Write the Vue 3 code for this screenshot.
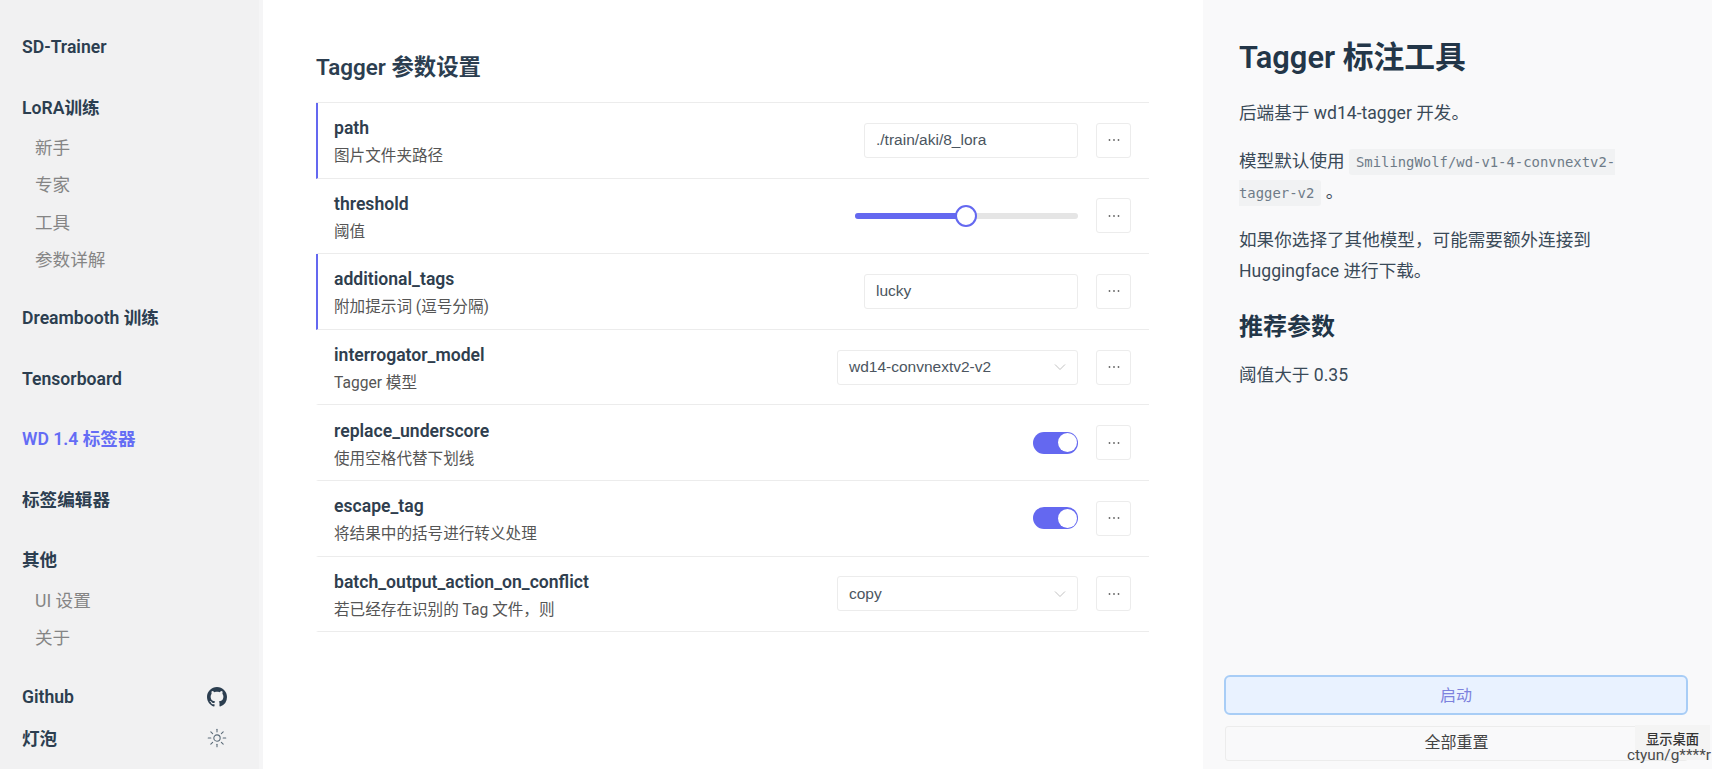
<script setup>
const subA = ['新手', '专家', '工具', '参数详解']
const subB = ['UI 设置', '关于']
const rows = [
  { name: 'path', desc: '图片文件夹路径', type: 'input', value: './train/aki/8_lora', changed: true },
  { name: 'threshold', desc: '阈值', type: 'slider', percent: 50 },
  { name: 'additional_tags', desc: '附加提示词 (逗号分隔)', type: 'input', value: 'lucky', changed: true },
  { name: 'interrogator_model', desc: 'Tagger 模型', type: 'select', value: 'wd14-convnextv2-v2' },
  { name: 'replace_underscore', desc: '使用空格代替下划线', type: 'switch' },
  { name: 'escape_tag', desc: '将结果中的括号进行转义处理', type: 'switch' },
  { name: 'batch_output_action_on_conflict', desc: '若已经存在识别的 Tag 文件，则', type: 'select', value: 'copy' },
]
const rays = [0, 45, 90, 135, 180, 225, 270, 315]
</script>

<template>
  <div class="app">
    <aside class="sidebar">
      <div class="section">SD-Trainer</div>
      <div class="section">LoRA训练</div>
      <ul class="sub">
        <li v-for="s in subA" :key="s">{{ s }}</li>
      </ul>
      <div class="section">Dreambooth 训练</div>
      <div class="section">Tensorboard</div>
      <div class="section active">WD 1.4 标签器</div>
      <div class="section">标签编辑器</div>
      <div class="section">其他</div>
      <ul class="sub">
        <li v-for="s in subB" :key="s">{{ s }}</li>
      </ul>
      <div class="foot">
        <div class="foot-row">
          <span>Github</span>
          <svg class="foot-icon" viewBox="0 0 16 16" fill="#2c3e50"><path d="M8 0C3.58 0 0 3.58 0 8c0 3.54 2.29 6.53 5.47 7.59.4.07.55-.17.55-.38 0-.19-.01-.82-.01-1.49-2.01.37-2.53-.49-2.69-.94-.09-.23-.48-.94-.82-1.13-.28-.15-.68-.52-.01-.53.63-.01 1.08.58 1.23.82.72 1.21 1.87.87 2.33.66.07-.52.28-.87.51-1.07-1.78-.2-3.64-.89-3.64-3.95 0-.87.31-1.59.82-2.15-.08-.2-.36-1.02.08-2.12 0 0 .67-.21 2.2.82.64-.18 1.32-.27 2-.27s1.36.09 2 .27c1.53-1.04 2.2-.82 2.2-.82.44 1.1.16 1.92.08 2.12.51.56.82 1.27.82 2.15 0 3.07-1.87 3.75-3.65 3.95.29.25.54.73.54 1.48 0 1.07-.01 1.93-.01 2.2 0 .21.15.46.55.38A8.01 8.01 0 0 0 16 8c0-4.42-3.58-8-8-8z"/></svg>
        </div>
        <div class="foot-row">
          <span>灯泡</span>
          <svg class="foot-icon" viewBox="0 0 24 24" fill="none" stroke="#5a6a78" stroke-width="1.3" stroke-linecap="round">
            <circle cx="12" cy="12" r="3.8" />
            <line v-for="r in rays" :key="r" x1="12" y1="1.5" x2="12" y2="4.6" :transform="`rotate(${r} 12 12)`" />
          </svg>
        </div>
      </div>
    </aside>

    <main class="main">
      <h2 class="main-title">Tagger 参数设置</h2>
      <div class="rows">
        <div v-for="r in rows" :key="r.name" class="row" :class="{ changed: r.changed }">
          <div class="info">
            <div class="name">{{ r.name }}</div>
            <div class="desc">{{ r.desc }}</div>
          </div>
          <div class="control">
            <div v-if="r.type === 'input'" class="input">{{ r.value }}</div>
            <div v-else-if="r.type === 'select'" class="input select">
              <span>{{ r.value }}</span>
              <svg class="chev" viewBox="0 0 12 12" fill="none" stroke="#c2c2c2" stroke-width="1"><path d="M1 3.5 6 8.5 11 3.5" /></svg>
            </div>
            <div v-else-if="r.type === 'slider'" class="slider">
              <div class="fill" :style="{ width: r.percent + '%' }"></div>
              <div class="thumb"></div>
            </div>
            <div v-else class="switch"><div class="knob"></div></div>
            <div class="more">
              <svg viewBox="0 0 14 4" width="14" height="4" fill="#666"><circle cx="2.5" cy="2" r="0.9" /><circle cx="7" cy="2" r="0.9" /><circle cx="11.5" cy="2" r="0.9" /></svg>
            </div>
          </div>
        </div>
      </div>
    </main>

    <aside class="panel">
      <div class="doc">
        <h1>Tagger 标注工具</h1>
        <p>后端基于 wd14-tagger 开发。</p>
        <p>模型默认使用 <code>SmilingWolf/wd-v1-4-convnextv2-tagger-v2</code> 。</p>
        <p>如果你选择了其他模型，可能需要额外连接到 Huggingface 进行下载。</p>
        <h2>推荐参数</h2>
        <p>阈值大于 0.35</p>
      </div>
      <div class="actions">
        <div class="btn primary">启动</div>
        <div class="btn reset">全部重置</div>
      </div>
      <div class="tip">显示桌面</div>
      <div class="user">ctyun/g****r</div>
    </aside>
  </div>
</template>

<style>
html, body { margin: 0; background: #fff; }
</style>

<style scoped>
.app {
  display: flex;
  height: 769px;
  overflow: hidden;
  font-family: Roboto, "Noto Sans CJK SC", sans-serif;
  color: #2c3e50;
  background: #fff;
}
.sidebar {
  box-sizing: border-box;
  width: 263px;
  flex: none;
  display: flex;
  flex-direction: column;
  padding: 29px 0 0 22px;
  background: #f1f1f2;
  border-right: 4px solid #f5f5f6;
}
.section {
  font-size: 17.6px;
  font-weight: 600;
  line-height: 37px;
  margin-bottom: 23.6px;
  color: #2c3e50;
}
.section.active { color: #646cf5; }
.sub {
  list-style: none;
  margin: -20px 0 20.6px;
  padding: 0 0 0 13px;
}
.sub li {
  font-size: 17.6px;
  line-height: 37.3px;
  color: #858585;
}
.foot {
  margin-top: auto;
  padding-bottom: 20px;
  padding-right: 22px;
  display: flex;
  flex-direction: column;
  gap: 4px;
}
.foot-row {
  display: flex;
  align-items: center;
  justify-content: space-between;
  height: 37px;
  font-size: 17.6px;
  font-weight: 600;
  padding-right: 10px;
}
.foot-icon { width: 20px; height: 20px; }
.main {
  flex: 1;
  min-width: 0;
  padding: 0 54px 0 53px;
}
.main-title {
  font-size: 22.4px;
  font-weight: 600;
  line-height: 30px;
  margin: 52px 0 20px;
}
.rows { border-top: 1px solid #ececec; }
.row {
  box-sizing: border-box;
  height: 75.6px;
  display: flex;
  align-items: center;
  justify-content: space-between;
  padding: 0 18px 0 16px;
  border-bottom: 1px solid #ececec;
  border-left: 2px solid transparent;
}
.row.changed { border-left-color: #6468f0; }
.info { padding-top: 6px; }
.name {
  font-size: 17.6px;
  font-weight: 600;
  line-height: 26px;
  color: #2f3e4e;
}
.desc {
  font-size: 15.6px;
  line-height: 30px;
  color: #555;
}
.control {
  display: flex;
  align-items: center;
  gap: 18px;
}
.input {
  box-sizing: border-box;
  width: 214px;
  height: 35px;
  padding: 0 11px;
  display: flex;
  align-items: center;
  font-family: "Liberation Sans", sans-serif;
  font-size: 15.5px;
  color: #4b5560;
  border: 1px solid #ececec;
  border-radius: 3px;
}
.select {
  width: 241px;
  justify-content: space-between;
}
.chev { width: 12px; height: 12px; margin-right: 0; }
.slider {
  position: relative;
  width: 223px;
  height: 6px;
  border-radius: 3px;
  background: #e5e5e5;
}
.fill {
  height: 100%;
  border-radius: 3px;
  background: #6468f0;
}
.thumb {
  position: absolute;
  left: 100px;
  top: -8px;
  box-sizing: border-box;
  width: 22px;
  height: 22px;
  border-radius: 50%;
  background: #fff;
  border: 2px solid #6468f0;
}
.switch {
  box-sizing: border-box;
  width: 45px;
  height: 22px;
  border-radius: 11px;
  background: #6468f0;
  display: flex;
  justify-content: flex-end;
  align-items: center;
  padding-right: 1px;
}
.knob {
  width: 19px;
  height: 19px;
  border-radius: 50%;
  background: #fff;
}
.more {
  box-sizing: border-box;
  width: 35px;
  height: 35px;
  display: flex;
  align-items: center;
  justify-content: center;
  border: 1px solid #ececec;
  border-radius: 3px;
}
.panel {
  position: relative;
  box-sizing: border-box;
  width: 509px;
  flex: none;
  display: flex;
  flex-direction: column;
  justify-content: space-between;
  background: #f9f9fa;
  padding: 0 24px 8px 20px;
}
.doc {
  padding: 37px 50px 0 16px;
}
.doc h1 {
  font-size: 30.8px;
  font-weight: 600;
  line-height: 42px;
  margin: 0 0 19px;
  color: #233648;
}
.doc h2 {
  font-size: 24px;
  font-weight: 600;
  line-height: 36px;
  margin: 23px 0 15px;
  color: #233648;
}
.doc p {
  font-size: 17.6px;
  line-height: 30.6px;
  margin: 0 0 17.6px;
  color: #3a4a58;
}
.doc code {
  font-family: "DejaVu Sans Mono", monospace;
  font-size: 13.9px;
  line-height: 1;
  color: #6e7b88;
  background: #f1f2f3;
  padding: 5px 7px;
  border-radius: 3px;
  -webkit-box-decoration-break: slice;
  box-decoration-break: slice;
}
.actions {
  display: flex;
  flex-direction: column;
  gap: 11px;
}
.btn {
  box-sizing: border-box;
  height: 35px;
  padding-bottom: 2px;
  display: flex;
  align-items: center;
  justify-content: center;
  font-size: 16px;
  color: #444;
  border: 1px solid #ececec;
  border-radius: 3px;
  margin-left: 2px;
}
.btn.reset { padding-bottom: 5px; }
.btn.primary {
  height: 40px;
  margin-left: 1px;
  color: #7d82dd;
  background: #e9f2ff;
  border: 2px solid #a8cdf6;
  border-radius: 6px;
}
.tip {
  position: absolute;
  right: 2px;
  bottom: 9px;
  box-sizing: border-box;
  width: 75px;
  height: 35px;
  padding-top: 6px;
  background: #f4f4f4;
  font-size: 13.3px;
  font-weight: 500;
  line-height: 18px;
  text-align: center;
  color: #333;
}
.user {
  position: absolute;
  right: 1px;
  bottom: 5px;
  font-size: 15.4px;
  line-height: 18px;
  color: #4a4a4a;
}
</style>
